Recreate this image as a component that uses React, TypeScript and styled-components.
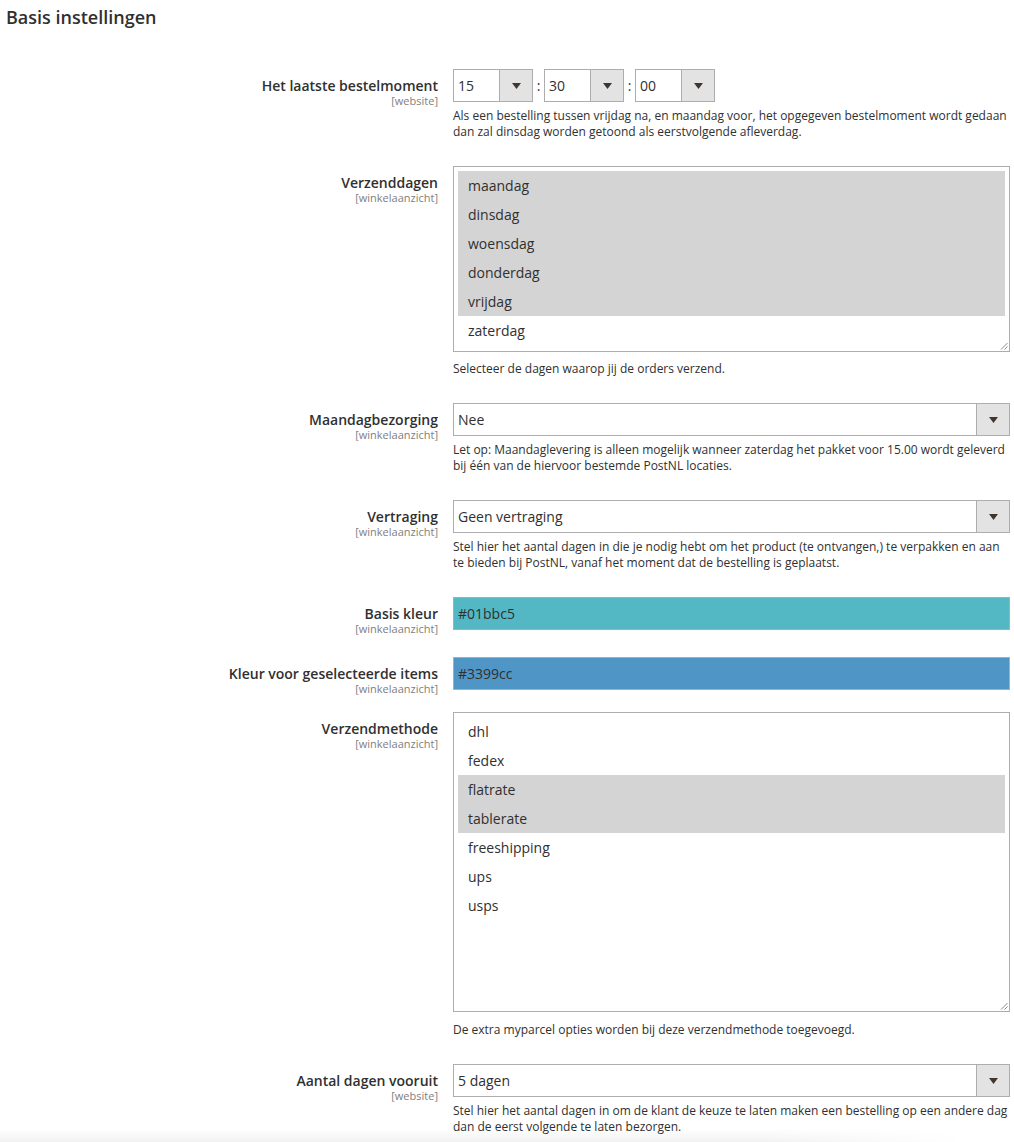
import React from "react";
import styled, { createGlobalStyle } from "styled-components";

const GlobalStyle = createGlobalStyle`
  html, body {
    margin: 0;
    padding: 0;
    background: #ffffff;
  }

  body {
    font-family: "Open Sans", "Noto Sans", "Liberation Sans", sans-serif;
    color: #303030;
    -webkit-font-smoothing: antialiased;
  }
`;

interface Option {
  label: string;
  selected?: boolean;
}

const weekdays: Option[] = [
  { label: "maandag", selected: true },
  { label: "dinsdag", selected: true },
  { label: "woensdag", selected: true },
  { label: "donderdag", selected: true },
  { label: "vrijdag", selected: true },
  { label: "zaterdag" },
];

const methods: Option[] = [
  { label: "dhl" },
  { label: "fedex" },
  { label: "flatrate", selected: true },
  { label: "tablerate", selected: true },
  { label: "freeshipping" },
  { label: "ups" },
  { label: "usps" },
];

const Arrow = () => (
  <svg width="9" height="6" viewBox="0 0 9 6">
    <path d="M0 0 H9 L4.5 6 Z" fill="#41362f" />
  </svg>
);

const Grip = () => (
  <svg width="8" height="8" viewBox="0 0 8 8">
    <path d="M7.5 1 L1 7.5 M7.5 4.5 L4.5 7.5" stroke="#8a8a8a" strokeWidth="1" />
  </svg>
);

const Select = ({ value, width }: { value: string; width?: number }) => (
  <SelectBox $width={width}>
    <SelectValue>{value}</SelectValue>
    <SelectArrow>
      <Arrow />
    </SelectArrow>
  </SelectBox>
);

const MultiSelect = ({ options, height }: { options: Option[]; height: number }) => (
  <MultiBox $height={height}>
    {options.map((o) => (
      <MultiOption key={o.label} $selected={!!o.selected}>
        {o.label}
      </MultiOption>
    ))}
    <GripCorner>
      <Grip />
    </GripCorner>
  </MultiBox>
);

interface FieldProps {
  label: string;
  scope: string;
  note?: React.ReactNode;
  noteGap?: number;
  gap?: number;
  children: React.ReactNode;
}

const Field = ({ label, scope, note, noteGap = 6, gap = 26, children }: FieldProps) => (
  <FieldRow $gap={gap}>
    <LabelCol>
      <LabelText>{label}</LabelText>
      <Scope>[{scope}]</Scope>
    </LabelCol>
    <ControlCol>
      {children}
      {note && <Note $gap={noteGap}>{note}</Note>}
    </ControlCol>
  </FieldRow>
);

const App = () => {
  return (
    <>
      <GlobalStyle />
      <Page>
        <Title>Basis instellingen</Title>
        <Field
          label="Het laatste bestelmoment"
          scope="website"
          note={
            <>
              Als een bestelling tussen vrijdag na, en maandag voor, het opgegeven bestelmoment wordt gedaan
              <br />
              dan zal dinsdag worden getoond als eerstvolgende afleverdag.
            </>
          }
        >
          <TimeRow>
            <Select value="15" width={80} />
            <Colon>:</Colon>
            <Select value="30" width={80} />
            <Colon>:</Colon>
            <Select value="00" width={80} />
          </TimeRow>
        </Field>

        <Field
          label="Verzenddagen"
          scope="winkelaanzicht"
          noteGap={9}
          note="Selecteer de dagen waarop jij de orders verzend."
        >
          <MultiSelect options={weekdays} height={186} />
        </Field>

        <Field
          label="Maandagbezorging"
          scope="winkelaanzicht"
          note={
            <>
              Let op: Maandaglevering is alleen mogelijk wanneer zaterdag het pakket voor 15.00 wordt geleverd
              <br />
              bij één van de hiervoor bestemde PostNL locaties.
            </>
          }
        >
          <Select value="Nee" />
        </Field>

        <Field
          label="Vertraging"
          scope="winkelaanzicht"
          note={
            <>
              Stel hier het aantal dagen in die je nodig hebt om het product (te ontvangen,) te verpakken en aan
              <br />
              te bieden bij PostNL, vanaf het moment dat de bestelling is geplaatst.
            </>
          }
        >
          <Select value="Geen vertraging" />
        </Field>

        <Field label="Basis kleur" scope="winkelaanzicht" gap={22}>
          <ColorInput $color="#53b7c4">#01bbc5</ColorInput>
        </Field>

        <Field label="Kleur voor geselecteerde items" scope="winkelaanzicht" gap={17}>
          <ColorInput $color="#4f96c6">#3399cc</ColorInput>
        </Field>

        <Field
          label="Verzendmethode"
          scope="winkelaanzicht"
          noteGap={10}
          note="De extra myparcel opties worden bij deze verzendmethode toegevoegd."
        >
          <MultiSelect options={methods} height={300} />
        </Field>

        <Field
          label="Aantal dagen vooruit"
          scope="website"
          gap={0}
          note={
            <>
              Stel hier het aantal dagen in om de klant de keuze te laten maken een bestelling op een andere dag
              <br />
              dan de eerst volgende te laten bezorgen.
            </>
          }
        >
          <Select value="5 dagen" />
        </Field>
      </Page>
      <BottomFade />
    </>
  );
};

const Page = styled.div`
  padding: 5px 4px 0 0;
`;

const Title = styled.h2`
  margin: 0 0 40px 6px;
  font-size: 18px;
  line-height: 24px;
  font-weight: 600;
  color: #303030;
`;

const FieldRow = styled.div<{ $gap: number }>`
  display: grid;
  grid-template-columns: 438px 557px;
  column-gap: 15px;
  margin-bottom: ${(p) => p.$gap}px;
`;

const LabelCol = styled.div`
  padding-top: 7px;
  text-align: right;
`;

const LabelText = styled.div`
  font-size: 14px;
  line-height: 19px;
  font-weight: 600;
  color: #303030;
`;

const Scope = styled.div`
  font-size: 11px;
  line-height: 12px;
  color: #808080;
`;

const ControlCol = styled.div`
  display: flex;
  flex-direction: column;
`;

const Note = styled.div<{ $gap: number }>`
  margin-top: ${(p) => p.$gap}px;
  font-size: 12px;
  line-height: 16px;
  color: #303030;
`;

const TimeRow = styled.div`
  display: flex;
  align-items: center;
`;

const Colon = styled.span`
  width: 11px;
  text-align: center;
  font-size: 14px;
  color: #303030;
`;

const SelectBox = styled.div<{ $width?: number }>`
  display: flex;
  box-sizing: border-box;
  width: ${(p) => (p.$width ? `${p.$width}px` : "100%")};
  height: 33px;
  border: 1px solid #adadad;
  background: #ffffff;
`;

const SelectValue = styled.div`
  flex: 1;
  padding-left: 4px;
  font-size: 14px;
  line-height: 31px;
  color: #303030;
`;

const SelectArrow = styled.div`
  display: flex;
  align-items: center;
  justify-content: center;
  width: 32px;
  border-left: 1px solid #adadad;
  background: #e3e3e3;
`;

const ColorInput = styled.div<{ $color: string }>`
  box-sizing: border-box;
  height: 33px;
  padding-left: 4px;
  border: 1px solid #adadad;
  background: ${(p) => p.$color};
  font-size: 14px;
  line-height: 31px;
  color: #303030;
`;

const MultiBox = styled.div<{ $height: number }>`
  position: relative;
  box-sizing: border-box;
  height: ${(p) => p.$height}px;
  padding: 4px;
  border: 1px solid #adadad;
  background: #ffffff;
`;

const MultiOption = styled.div<{ $selected: boolean }>`
  height: 29px;
  padding-left: 10px;
  font-size: 14px;
  line-height: 29px;
  color: #303030;
  background: ${(p) => (p.$selected ? "#d4d4d4" : "transparent")};
`;

const GripCorner = styled.div`
  position: absolute;
  right: 1px;
  bottom: 1px;
  display: flex;
`;

const BottomFade = styled.div`
  position: relative;
  height: 14px;
  margin-top: -6px;
  background: linear-gradient(to bottom, rgba(0, 0, 0, 0) 0%, rgba(0, 0, 0, 0.06) 100%);
  -webkit-mask-image: linear-gradient(to right, #000 0%, #000 75%, transparent 95%);
  mask-image: linear-gradient(to right, #000 0%, #000 75%, transparent 95%);
  pointer-events: none;
`;

export default App;
